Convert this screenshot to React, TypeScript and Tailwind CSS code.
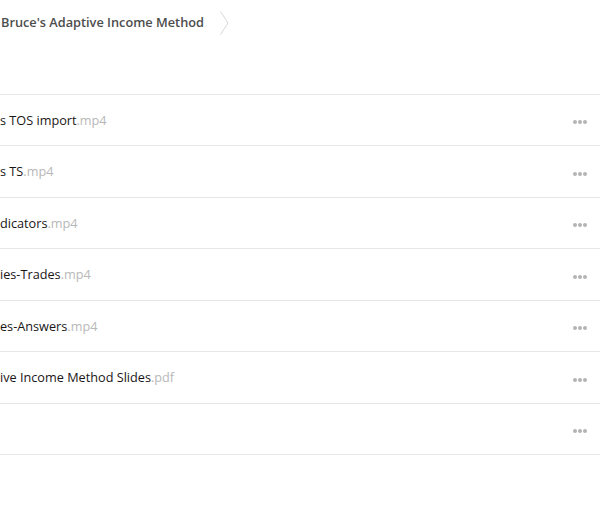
const rows = [
  { name: "s TOS import", ext: ".mp4" },
  { name: "s TS", ext: ".mp4" },
  { name: "dicators", ext: ".mp4" },
  { name: "ies-Trades", ext: ".mp4" },
  { name: "es-Answers", ext: ".mp4" },
  { name: "ive Income Method Slides", ext: ".pdf" },
  { name: "", ext: "" },
];

function MoreDots() {
  return (
    <svg width="14" height="4" viewBox="0 0 14 4" className="text-[#b4b4b4]">
      <circle cx="2" cy="2" r="2" fill="currentColor" />
      <circle cx="7" cy="2" r="2" fill="currentColor" />
      <circle cx="12" cy="2" r="2" fill="currentColor" />
    </svg>
  );
}

export default function App() {
  return (
    <div
      className="w-[600px] h-[525px] bg-white overflow-hidden"
      style={{ fontFamily: '"Open Sans", "Liberation Sans", sans-serif' }}
    >
      <div className="h-[94px] pt-[11px]">
        <div className="flex items-center h-[24px]">
          <span className="text-[12.75px] font-semibold text-[#4d4d4d] pl-[1px]">Bruce's Adaptive Income Method</span>
          <svg width="9" height="24" viewBox="0 0 9 24" className="ml-[16px]">
            <path d="M0.5 0.5 L8 12 L0.5 23.5" fill="none" stroke="#d8d8d8" strokeWidth="1" />
          </svg>
        </div>
      </div>

      <div className="border-t border-[#e6e6e6]">
        {rows.map((r, i) => (
          <div
            key={i}
            className={`flex items-center justify-between border-b border-[#e6e6e6] ${i % 2 === 0 ? "h-[51px]" : "h-[52px]"}`}
          >
            <div className="text-[12.7px] text-[#1a1616] whitespace-nowrap pt-[1px]">
              {r.name}
              <span className="text-[#b8b8b8]">{r.ext}</span>
            </div>
            <div className="mr-[13px] pt-[4px] flex items-center">
              <MoreDots />
            </div>
          </div>
        ))}
      </div>
    </div>
  );
}
